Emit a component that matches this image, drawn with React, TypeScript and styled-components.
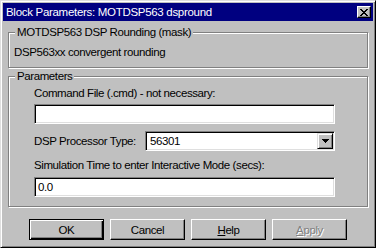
import React from "react";
import styled, { createGlobalStyle } from "styled-components";

const Global = createGlobalStyle`
  html, body { margin: 0; padding: 0; background: #c0c0c0; }
  * { box-sizing: border-box; }
`;

const Window = styled.div`
  width: 376px;
  height: 248px;
  background: #c0c0c0;
  border: 1px solid;
  border-color: #dfdfdf #000 #000 #dfdfdf;
  box-shadow: inset 1px 1px 0 #fff, inset -1px -1px 0 #808080;
  padding: 2px;
  display: flex;
  flex-direction: column;
  font-family: "Liberation Sans", Arial, sans-serif;
  font-size: 11.5px;
  color: #000;
`;

const TitleBar = styled.div`
  height: 18px;
  background: #000080;
  color: #fff;
  display: flex;
  align-items: center;
  padding: 0 2px 0 3px;
  letter-spacing: -0.3px;
`;

const TitleText = styled.span`
  flex: 1;
  white-space: nowrap;
`;

const CloseBtn = styled.div`
  width: 14px;
  height: 12px;
  background: #c0c0c0;
  border: 1px solid;
  border-color: #fff #000 #000 #fff;
  box-shadow: inset -1px -1px 0 #808080;
  display: flex;
  align-items: center;
  justify-content: center;
`;

const Body = styled.div`
  flex: 1;
  display: flex;
  flex-direction: column;
  padding: 0 5px;
  letter-spacing: -0.4px;
`;

const Group = styled.div<{ $top: number; $h: number }>`
  position: relative;
  margin-top: ${(p) => p.$top}px;
  height: ${(p) => p.$h}px;
  border: 1px solid #808080;
  box-shadow: inset 1px 1px 0 #fff, 1px 1px 0 #fff;
  display: flex;
  flex-direction: column;
`;

const Legend = styled.span`
  position: absolute;
  top: -7px;
  left: 6px;
  padding: 0 2px;
  background: #c0c0c0;
  line-height: 13px;
  white-space: nowrap;
`;

const Desc = styled.div`
  padding: 13px 0 0 5px;
  line-height: 13px;
`;

const ParamContent = styled.div`
  padding: 10px 0 0 25px;
  display: flex;
  flex-direction: column;
`;

const Label = styled.div<{ $mt: number }>`
  margin-top: ${(p) => p.$mt}px;
  line-height: 13px;
  white-space: nowrap;
`;

const Sunken = styled.div`
  background: #fff;
  border: 1px solid;
  border-color: #808080 #fff #fff #808080;
  box-shadow: inset 1px 1px 0 #000, inset -1px -1px 0 #dfdfdf;
`;

const TextInput = styled(Sunken)<{ $mt: number }>`
  margin-top: ${(p) => p.$mt}px;
  width: 301px;
  height: 20px;
  display: flex;
  align-items: center;
  padding-left: 3px;
`;

const ComboRow = styled.div`
  margin-top: 7px;
  display: flex;
  align-items: center;
  width: 301px;
  height: 20px;
`;

const RowLabel = styled.div`
  flex: 1;
  line-height: 13px;
`;

const Combo = styled(Sunken)`
  width: 190px;
  height: 20px;
  display: flex;
  align-items: center;
  padding: 0 1px 0 4px;
`;

const ComboValue = styled.span`
  flex: 1;
`;

const DropBtn = styled.div`
  width: 16px;
  height: 16px;
  background: #c0c0c0;
  border: 1px solid;
  border-color: #dfdfdf #000 #000 #dfdfdf;
  box-shadow: inset 1px 1px 0 #fff, inset -1px -1px 0 #808080;
  display: flex;
  align-items: center;
  justify-content: center;
`;

const ButtonRow = styled.div`
  margin-top: 12px;
  padding-left: 21px;
  display: flex;
  gap: 6px;
`;

const Button = styled.div<{ $default?: boolean; $disabled?: boolean }>`
  width: 75px;
  height: 21px;
  background: #c0c0c0;
  border: 1px solid;
  border-color: ${(p) => (p.$default ? "#000" : "#fff #000 #000 #fff")};
  box-shadow: ${(p) =>
    p.$default
      ? "inset 1px 1px 0 #fff, inset -1px -1px 0 #000, inset -2px -2px 0 #808080"
      : "inset -1px -1px 0 #808080"};
  display: flex;
  align-items: center;
  justify-content: center;
  color: ${(p) => (p.$disabled ? "#808080" : "#000")};
  text-shadow: ${(p) => (p.$disabled ? "1px 1px 0 #fff" : "none")};
`;

const U = styled.span`
  text-decoration: underline;
`;

const CloseGlyph = () => (
  <svg width="8" height="7" viewBox="0 0 8 7" shapeRendering="crispEdges">
    <path
      d="M0 0h2v1H0zM6 0h2v1H6zM1 1h2v1H1zM5 1h2v1H5zM2 2h4v1H2zM3 3h2v1H3zM2 4h4v1H2zM1 5h2v1H1zM5 5h2v1H5zM0 6h2v1H0zM6 6h2v1H6z"
      fill="#000"
    />
  </svg>
);

const DownArrow = () => (
  <svg width="7" height="4" viewBox="0 0 7 4" shapeRendering="crispEdges">
    <path d="M0 0h7v1H0zM1 1h5v1H1zM2 2h3v1H2zM3 3h1v1H3z" fill="#000" />
  </svg>
);

export default function App() {
  return (
    <>
      <Global />
      <Window>
        <TitleBar>
          <TitleText>Block Parameters: MOTDSP563 dspround</TitleText>
          <CloseBtn>
            <CloseGlyph />
          </CloseBtn>
        </TitleBar>
        <Body>
          <Group $top={11} $h={36}>
            <Legend>MOTDSP563 DSP Rounding (mask)</Legend>
            <Desc>DSP563xx convergent rounding</Desc>
          </Group>
          <Group $top={8} $h={131}>
            <Legend>Parameters</Legend>
            <ParamContent>
              <Label $mt={0}>Command File (.cmd) - not necessary:</Label>
              <TextInput $mt={4} />
              <ComboRow>
                <RowLabel>DSP Processor Type:</RowLabel>
                <Combo>
                  <ComboValue>56301</ComboValue>
                  <DropBtn>
                    <DownArrow />
                  </DropBtn>
                </Combo>
              </ComboRow>
              <Label $mt={8}>Simulation Time to enter Interactive Mode (secs):</Label>
              <TextInput $mt={5}>0.0</TextInput>
            </ParamContent>
          </Group>
          <ButtonRow>
            <Button $default>OK</Button>
            <Button>Cancel</Button>
            <Button>
              <U>H</U>elp
            </Button>
            <Button $disabled>
              <U>A</U>pply
            </Button>
          </ButtonRow>
        </Body>
      </Window>
    </>
  );
}
